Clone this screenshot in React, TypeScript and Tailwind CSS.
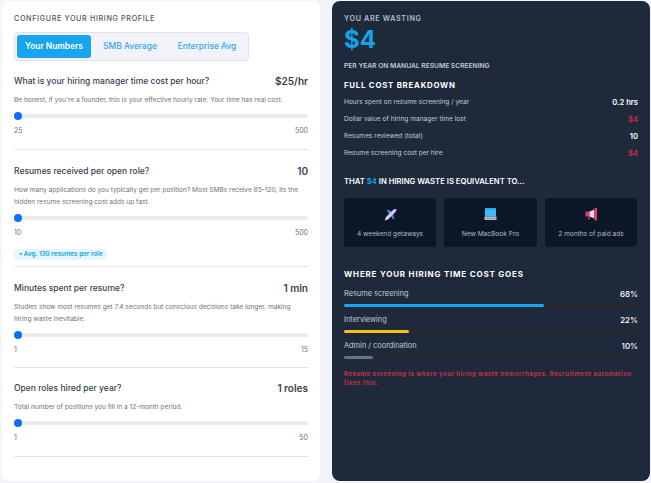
const font = { fontFamily: "Inter, 'Noto Sans', sans-serif" };

function Slider(props: { min: string; max: string }) {
  return (
    <div>
      <div className="relative h-[4px] rounded-full bg-[#e9ebef]">
        <div className="absolute left-0 top-[-2px] h-[8px] w-[8px] rounded-full bg-[#0d6efd]"></div>
      </div>
      <div className="flex justify-between mt-[7px] text-[7px] leading-[11px] text-[#6b7280]">
        <span>{props.min}</span>
        <span>{props.max}</span>
      </div>
    </div>
  );
}

function Question(props: {
  title: string;
  value: string;
  help: string;
  min: string;
  max: string;
  badge?: string;
  className: string;
}) {
  return (
    <div className={`border-b border-[#e2e4ee] ${props.className}`}>
      <div className="flex justify-between items-center h-[14px]">
        <span className="text-[8.5px] font-medium text-[#374151]">{props.title}</span>
        <span className="text-[10px] font-semibold text-[#374151]">{props.value}</span>
      </div>
      <p className="mt-[5.5px] mb-[8px] text-[6.55px] leading-[12px] text-[#6b7280]">{props.help}</p>
      <Slider min={props.min} max={props.max} />
      {props.badge ? (
        <span className="inline-block mt-[5px] px-[5px] h-[11px] leading-[11px] rounded-[3px] bg-[#e6f5fe] text-[6.3px] font-semibold text-[#0ea5e9]">
          {props.badge}
        </span>
      ) : (
        ""
      )}
    </div>
  );
}

function PlaneIcon() {
  return (
    <svg width="13" height="13" viewBox="0 0 13 13">
      <path d="M2.5 2 H5.5 L8 4.5 L5 6 Z" fill="#3f86d8" />
      <path d="M7 8 L9 6 L10.5 10.5 L9 11.5 Z" fill="#3f86d8" />
      <path d="M0.5 12.5 L2 9 L9 2 Q11.5 0.5 12.3 1 Q13 2 11 4.5 L4 11.5 Z" fill="#d9cdec" />
    </svg>
  );
}

function LaptopIcon() {
  return (
    <svg width="13" height="13" viewBox="0 0 13 13">
      <rect x="1" y="0" width="11" height="8.5" fill="#38bdf8" />
      <rect x="1" y="0" width="11" height="1.5" fill="#29a3e8" />
      <rect x="0.5" y="8.5" width="12" height="3.5" rx="0.5" fill="#b8bdc6" />
      <rect x="2" y="10" width="9" height="0.7" fill="#7d8592" />
    </svg>
  );
}

function MegaphoneIcon() {
  return (
    <svg width="13" height="13" viewBox="0 0 13 13">
      <rect x="0.5" y="3.5" width="4" height="5" fill="#f0336b" />
      <path d="M4.5 3.5 L9.5 1.5 V10.5 L4.5 8.5 Z" fill="#f6d5dc" />
      <rect x="9.5" y="0" width="2.5" height="12.5" fill="#f0336b" />
      <rect x="3" y="8.5" width="2" height="3" fill="#a9324f" />
    </svg>
  );
}

function Row(props: { label: string; value: string; red?: boolean }) {
  return (
    <div className="flex justify-between items-center h-[17px]">
      <span className="text-[6.6px] text-[#c3c9d6]">{props.label}</span>
      <span className={`text-[7.6px] font-semibold ${props.red ? "text-[#c4314b]" : "text-white"}`}>{props.value}</span>
    </div>
  );
}

function Tile(props: { icon: React.ReactNode; label: string; className: string }) {
  return (
    <div className={`flex flex-col items-center rounded-[4px] bg-[#0b1628] h-[49px] pt-[10px] ${props.className}`}>
      {props.icon}
      <span className="mt-[8px] text-[6.6px] leading-[11px] text-[#b4bac6]">{props.label}</span>
    </div>
  );
}

function Bar(props: { label: string; value: string; fill: string }) {
  return (
    <div className="h-[26px]">
      <div className="flex justify-between items-center h-[14px]">
        <span className="text-[7.4px] text-[#c3c9d6]">{props.label}</span>
        <span className="text-[8px] font-medium text-white">{props.value}</span>
      </div>
      <div className="mt-[3px] h-[3px] rounded-full bg-[#2a2a2c]">
        <div className={`h-[3px] rounded-full ${props.fill}`}></div>
      </div>
    </div>
  );
}

export default function App() {
  return (
    <div style={font} className="flex gap-[12px] w-[651px] h-[483px] overflow-hidden bg-[#f3f5fa] pt-[1px] pl-[2px]">
      {/* Left card */}
      <div className="w-[318px] h-[480px] rounded-[8px] bg-white px-[12px] pt-[13px]">
        <h2 className="text-[7.2px] leading-[10px] font-medium tracking-[0.09em] text-[#4b5563]">
          CONFIGURE YOUR HIRING PROFILE
        </h2>
        <div className="flex w-[235px] h-[29px] mt-[8px] p-[2px] rounded-[4px] border border-[#dfe3ee] bg-[#f1f3f9] text-[8.4px] font-medium text-[#38a5f0]">
          <span className="flex items-center justify-center w-[74px] rounded-[3px] bg-[#16a5ee] font-semibold text-white">
            Your Numbers
          </span>
          <span className="flex items-center justify-center w-[78px]">SMB Average</span>
          <span className="flex items-center justify-center w-[76px]">Enterprise Avg</span>
        </div>
        <Question
          className="mt-[13px] h-[76px]"
          title="What is your hiring manager time cost per hour?"
          value="$25/hr"
          help="Be honest, if you're a founder, this is your effective hourly rate. Your time has real cost."
          min="25"
          max="500"
        />
        <Question
          className="mt-[14px] h-[103px]"
          title="Resumes received per open role?"
          value="10"
          help="How many applications do you typically get per position? Most SMBs receive 85–120, its the hidden resume screening cost adds up fast."
          min="10"
          max="500"
          badge="• Avg. 130 resumes per role"
        />
        <Question
          className="mt-[14px] h-[87px]"
          title="Minutes spent per resume?"
          value="1 min"
          help="Studies show most resumes get 7.4 seconds but conscious decisions take longer, making hiring waste inevitable."
          min="1"
          max="15"
        />
        <Question
          className="mt-[13px] h-[76px]"
          title="Open roles hired per year?"
          value="1 roles"
          help="Total number of positions you fill in a 12-month period."
          min="1"
          max="50"
        />
      </div>

      {/* Right card */}
      <div className="w-[318px] h-[480px] rounded-[8px] bg-[#1e293b] px-[12px] pt-[13px]">
        <div className="text-[7.2px] leading-[10px] font-semibold tracking-[0.09em] text-[#b6bdca]">YOU ARE WASTING</div>
        <div className="mt-[1px] text-[24px] leading-[30px] font-bold text-[#0ea5e9]">$4</div>
        <div className="mt-[6px] text-[6.7px] leading-[10px] font-semibold text-[#c3c9d6]">
          PER YEAR ON MANUAL RESUME SCREENING
        </div>
        <h3 className="mt-[8px] text-[7.8px] leading-[12px] font-bold tracking-[0.1em] text-white">FULL COST BREAKDOWN</h3>
        <div className="mt-[3px]">
          <Row label="Hours spent on resume screening / year" value="0.2 hrs" />
          <Row label="Dollar value of hiring manager time lost" value="$4" red />
          <Row label="Resumes reviewed (total)" value="10" />
          <Row label="Resume screening cost per hire" value="$4" red />
        </div>
        <h3 className="mt-[14px] text-[7.7px] leading-[12px] font-semibold text-white">
          THAT <span className="text-[#0ea5e9]">$4</span> IN HIRING WASTE IS EQUIVALENT TO...
        </h3>
        <div className="flex mt-[10px]">
          <Tile className="w-[92px]" icon={<PlaneIcon />} label="4 weekend getaways" />
          <Tile className="w-[93px] ml-[8px]" icon={<LaptopIcon />} label="New MacBook Pro" />
          <Tile className="w-[92px] ml-[8px]" icon={<MegaphoneIcon />} label="2 months of paid ads" />
        </div>
        <h3 className="mt-[21px] text-[8px] leading-[12px] font-bold tracking-[0.1em] text-white">
          WHERE YOUR HIRING TIME COST GOES
        </h3>
        <div className="mt-[7px]">
          <Bar label="Resume screening" value="68%" fill="w-[68%] bg-[#16a5ee]" />
          <Bar label="Interviewing" value="22%" fill="w-[22%] bg-[#fbbf16]" />
          <Bar label="Admin / coordination" value="10%" fill="w-[10%] bg-[#6b7280]" />
        </div>
        <p className="mt-[4px] text-[6px] leading-[9px] font-bold tracking-[0.085em] text-[#c4314b]">
          Resume screening is where your hiring waste hemorrhages. Recruitment automation fixes this.
        </p>
      </div>
    </div>
  );
}
